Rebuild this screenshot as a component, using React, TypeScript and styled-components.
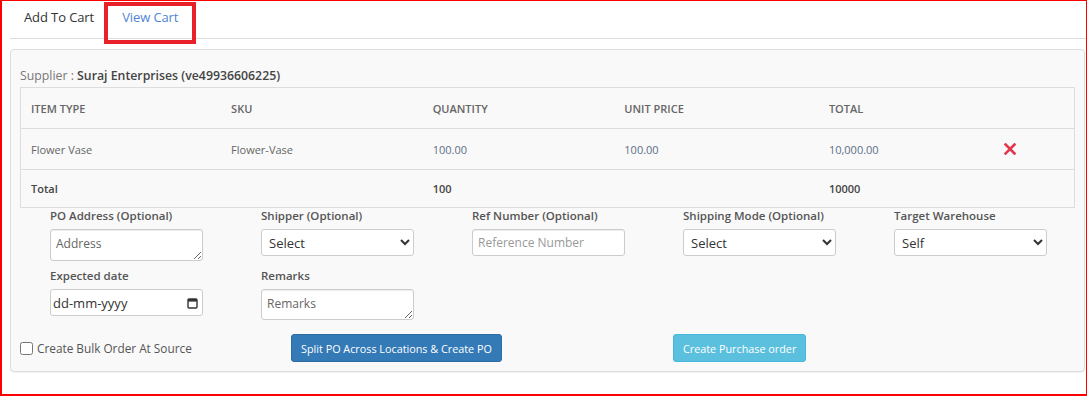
import React from "react";
import styled, { createGlobalStyle } from "styled-components";

const GlobalStyle = createGlobalStyle`
  html, body {
    margin: 0;
    padding: 0;
    background: #fff;
  }
  body {
    font-family: "Open Sans", "Liberation Sans", sans-serif;
    color: #333;
  }
  * {
    box-sizing: border-box;
  }
`;

const Frame = styled.div`
  width: 1087px;
  height: 396px;
  border: 1px solid #ff0000;
  border-left-width: 2px;
  border-bottom-width: 2px;
  background: #fff;
  overflow: hidden;
`;

const TabBar = styled.div`
  display: flex;
  margin-left: 8px;
  border-bottom: 1px solid #ddd;
`;

const Tab = styled.div<{ $active?: boolean }>`
  position: relative;
  padding: 7px 14px 12px;
  font-size: 13px;
  line-height: 18px;
  letter-spacing: -0.1px;
  font-weight: ${(p) => (p.$active ? 400 : 500)};
  color: ${(p) => (p.$active ? "#4f86d4" : "#333")};
`;

// annotation box drawn over the active tab
const Highlight = styled.span`
  position: absolute;
  left: -4px;
  top: 1px;
  width: 92px;
  height: 42px;
  border: 4px solid #e8202a;
  pointer-events: none;
`;

const Card = styled.div`
  margin: 10px 1px 0 8px;
  background: #f9f9f9;
  border: 1px solid #ddd;
  border-radius: 4px;
  padding: 17px 9px 9px;
  box-shadow: 0 1px 1px rgba(0, 0, 0, 0.05);
`;

const Supplier = styled.div`
  font-size: 12.3px;
  line-height: 18px;
  color: #777;
  margin-bottom: 2px;

  b {
    font-weight: 600;
    color: #444;
  }
`;

const Table = styled.table`
  width: 100%;
  border-collapse: collapse;
  border: 1px solid #ddd;
  font-size: 11px;
  color: #666;
`;

const Row = styled.tr<{ $h: number }>`
  height: ${(p) => p.$h}px;
  border-top: 1px solid #ddd;
`;

const Th = styled.th`
  text-align: left;
  padding: 0 10px;
  font-weight: 600;
  color: #666;
  text-transform: uppercase;
`;

const Td = styled.td<{ $num?: boolean; $bold?: boolean }>`
  padding: 0 10px;
  color: ${(p) => (p.$bold ? "#444" : p.$num ? "#5d6f88" : "#666")};
  font-weight: ${(p) => (p.$bold ? 600 : 400)};
`;

const RemoveIcon = styled.svg`
  display: block;
  margin-left: 4px;
`;

const Form = styled.div`
  padding-left: 30px;
  display: grid;
  grid-template-columns: repeat(5, 153px);
  column-gap: 58px;
  row-gap: 7px;
`;

const Field = styled.label`
  display: flex;
  flex-direction: column;
`;

const Label = styled.span`
  font-size: 11.5px;
  line-height: 16px;
  font-weight: 600;
  color: #555;
  margin-bottom: 5px;
`;

const TextArea = styled.textarea<{ $h: number }>`
  width: 153px;
  height: ${(p) => p.$h}px;
  border: 1px solid #ccc;
  border-radius: 3px;
  padding: 5px 5px;
  font-family: inherit;
  font-size: 12px;
  color: #333;
  background: #fff;
  box-shadow: inset 0 1px 1px rgba(0, 0, 0, 0.075);

  &::placeholder {
    color: #666;
  }
`;

const Select = styled.select`
  width: 153px;
  height: 27px;
  border: 1px solid #ccc;
  border-radius: 3px;
  padding: 0 3px;
  font-family: inherit;
  font-size: 13px;
  color: #333;
  background: #fff;
`;

const Input = styled.input`
  width: 153px;
  height: 27px;
  border: 1px solid #ccc;
  border-radius: 3px;
  padding: 0 5px;
  font-family: inherit;
  font-size: 12px;
  color: #333;
  background: #fff;
  box-shadow: inset 0 1px 1px rgba(0, 0, 0, 0.075);

  &::placeholder {
    color: #999;
  }
`;

const DateBox = styled.div`
  width: 153px;
  height: 27px;
  display: flex;
  align-items: center;
  border: 1px solid #ccc;
  border-radius: 3px;
  background: #fff;
  padding: 0 4px 0 2px;
`;

const DateInput = styled.input`
  flex: 1;
  min-width: 0;
  border: none;
  outline: none;
  background: transparent;
  font-family: inherit;
  font-size: 13px;
  color: #333;
  padding: 0;

  &::placeholder {
    color: #333;
  }
`;

const Actions = styled.div`
  display: grid;
  grid-template-columns: 271px 382px auto;
  align-items: center;
  margin-top: 14px;
`;

const Check = styled.label`
  display: flex;
  align-items: center;
  gap: 4px;
  font-size: 11.8px;
  color: #555;

  input {
    margin: 0;
    width: 13px;
    height: 13px;
  }
`;

const Button = styled.button<{ $variant: "primary" | "info" }>`
  justify-self: start;
  height: 28px;
  padding: 0 9px;
  border-radius: 3px;
  font-family: inherit;
  font-size: 10.8px;
  color: #fff;
  background: ${(p) => (p.$variant === "primary" ? "#337ab7" : "#5bc0de")};
  border: 1px solid ${(p) => (p.$variant === "primary" ? "#2e6da4" : "#46b8da")};
`;

const cols = [201, 202, 192, 205, 171, 85];

const CalendarIcon = () => (
  <svg width="11" height="12" viewBox="0 0 11 12">
    <rect x="1" y="2" width="9" height="9" rx="1" fill="none" stroke="#333" strokeWidth="1.4" />
    <rect x="1" y="2" width="9" height="2.6" fill="#333" />
  </svg>
);

export default function App() {
  return (
    <>
      <GlobalStyle />
      <Frame>
        <TabBar>
          <Tab>Add To Cart</Tab>
          <Tab $active>
            View Cart
            <Highlight />
          </Tab>
        </TabBar>

        <Card>
          <Supplier>
            Supplier : <b>Suraj Enterprises (ve49936606225)</b>
          </Supplier>

          <Table>
            <colgroup>
              {cols.map((w, i) => (
                <col key={i} style={{ width: w }} />
              ))}
            </colgroup>
            <thead>
              <Row $h={41}>
                <Th>Item Type</Th>
                <Th>SKU</Th>
                <Th>Quantity</Th>
                <Th>Unit Price</Th>
                <Th>Total</Th>
                <Th />
              </Row>
            </thead>
            <tbody>
              <Row $h={41}>
                <Td>Flower Vase</Td>
                <Td>Flower-Vase</Td>
                <Td $num>100.00</Td>
                <Td $num>100.00</Td>
                <Td $num>10,000.00</Td>
                <Td>
                  <RemoveIcon width="12" height="12" viewBox="0 0 12 12">
                    <path d="M1.5 1.5 L10.5 10.5 M10.5 1.5 L1.5 10.5" stroke="#e2374f" strokeWidth="2.6" strokeLinecap="square" />
                  </RemoveIcon>
                </Td>
              </Row>
              <Row $h={38}>
                <Td $bold>Total</Td>
                <Td />
                <Td $bold>100</Td>
                <Td />
                <Td $bold>10000</Td>
                <Td />
              </Row>
            </tbody>
          </Table>

          <Form>
            <Field>
              <Label>PO Address (Optional)</Label>
              <TextArea $h={32} placeholder="Address" />
            </Field>
            <Field>
              <Label>Shipper (Optional)</Label>
              <Select defaultValue="">
                <option value="">Select</option>
              </Select>
            </Field>
            <Field>
              <Label>Ref Number (Optional)</Label>
              <Input placeholder="Reference Number" />
            </Field>
            <Field>
              <Label>Shipping Mode (Optional)</Label>
              <Select defaultValue="">
                <option value="">Select</option>
              </Select>
            </Field>
            <Field>
              <Label>Target Warehouse</Label>
              <Select defaultValue="self">
                <option value="self">Self</option>
              </Select>
            </Field>
            <Field>
              <Label>Expected date</Label>
              <DateBox>
                <DateInput placeholder="dd-mm-yyyy" />
                <CalendarIcon />
              </DateBox>
            </Field>
            <Field>
              <Label>Remarks</Label>
              <TextArea $h={31} placeholder="Remarks" />
            </Field>
          </Form>

          <Actions>
            <Check>
              <input type="checkbox" />
              Create Bulk Order At Source
            </Check>
            <Button $variant="primary">Split PO Across Locations &amp; Create PO</Button>
            <Button $variant="info">Create Purchase order</Button>
          </Actions>
        </Card>
      </Frame>
    </>
  );
}
